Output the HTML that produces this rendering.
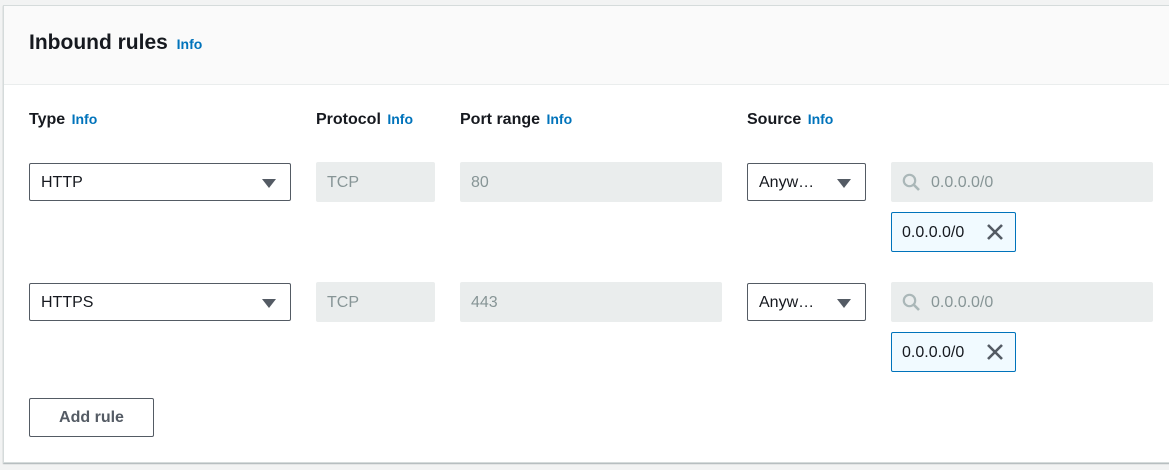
<!DOCTYPE html>
<html><head><style>
body{margin:0;width:1169px;height:470px;background:#f2f3f3;font-family:"Liberation Sans",sans-serif;position:relative;overflow:hidden}
.card{position:absolute;left:3px;top:5px;width:1180px;height:456px;background:#fff;border:1px solid #d5dbdb;border-right:none;box-shadow:0 1px 1px rgba(0,28,36,.3)}
.hdr{position:absolute;left:0;top:0;right:0;height:78px;background:#fafafa;border-bottom:1px solid #eaeded}
.abs{position:absolute}
h2{position:absolute;margin:0;font-size:21px;font-weight:bold;color:#16191f}
.info{color:#0073bb;font-size:14px;font-weight:bold;margin-left:3px}
.lbl{position:absolute;top:111px;font-size:16px;font-weight:bold;color:#16191f}
.lbl .info{margin-left:2px}
.sel{position:absolute;height:38px;border:1px solid #545b64;border-radius:2px;box-sizing:border-box;font-size:16px;color:#16191f;line-height:37px;padding-left:11px;background:#fff}
.sel:after{content:"";position:absolute;right:14px;top:15px;border-left:7px solid transparent;border-right:7px solid transparent;border-top:9px solid #545b64}
.dis{position:absolute;height:40px;background:#eaeded;border-radius:2px;font-size:16px;color:#879596;line-height:41px;padding-left:11px;box-sizing:border-box}
.tok{position:absolute;width:125px;height:40px;border:1px solid #0073bb;background:#f1faff;border-radius:2px;box-sizing:border-box;font-size:16px;color:#16191f;line-height:39px;padding-left:10px}
.tok svg{position:absolute;right:11px;top:10px}
.btn{position:absolute;left:29px;top:398px;width:125px;height:39px;border:1px solid #545b64;border-radius:2px;box-sizing:border-box;text-align:center;line-height:37px;font-weight:bold;font-size:16px;color:#545b64}
</style></head><body>
<div class="card"><div class="hdr"></div></div>
<h2 style="top:31px;left:29px">Inbound rules <span class="info">Info</span></h2>
<div class="lbl" style="left:29px">Type <span class="info">Info</span></div>
<div class="lbl" style="left:316px">Protocol <span class="info">Info</span></div>
<div class="lbl" style="left:460px">Port range <span class="info">Info</span></div>
<div class="lbl" style="left:747px">Source <span class="info">Info</span></div>

<div class="sel" style="left:29px;top:163px;width:262px">HTTP</div>
<div class="dis" style="left:316px;top:162px;width:119px">TCP</div>
<div class="dis" style="left:460px;top:162px;width:262px">80</div>
<div class="sel" style="left:747px;top:163px;width:119px">Anyw…</div>
<div class="dis" style="left:891px;top:162px;width:262px;padding-left:40px"><svg class="abs" style="left:11px;top:11px" width="19" height="19" viewBox="0 0 19 19"><circle cx="7.5" cy="7.5" r="5.7" fill="none" stroke="#aab7b8" stroke-width="2.2"/><path d="M11.5 11.5l5.5 5.5" stroke="#aab7b8" stroke-width="2.6"/></svg>0.0.0.0/0</div>
<div class="tok" style="left:891px;top:212px">0.0.0.0/0<svg width="18" height="18" viewBox="0 0 18 18"><path d="M2 2l14 14M16 2L2 16" stroke="#545b64" stroke-width="2.6"/></svg></div>

<div class="sel" style="left:29px;top:283px;width:262px">HTTPS</div>
<div class="dis" style="left:316px;top:282px;width:119px">TCP</div>
<div class="dis" style="left:460px;top:282px;width:262px">443</div>
<div class="sel" style="left:747px;top:283px;width:119px">Anyw…</div>
<div class="dis" style="left:891px;top:282px;width:262px;padding-left:40px"><svg class="abs" style="left:11px;top:11px" width="19" height="19" viewBox="0 0 19 19"><circle cx="7.5" cy="7.5" r="5.7" fill="none" stroke="#aab7b8" stroke-width="2.2"/><path d="M11.5 11.5l5.5 5.5" stroke="#aab7b8" stroke-width="2.6"/></svg>0.0.0.0/0</div>
<div class="tok" style="left:891px;top:332px">0.0.0.0/0<svg width="18" height="18" viewBox="0 0 18 18"><path d="M2 2l14 14M16 2L2 16" stroke="#545b64" stroke-width="2.6"/></svg></div>

<div class="btn">Add rule</div>
</body></html>
